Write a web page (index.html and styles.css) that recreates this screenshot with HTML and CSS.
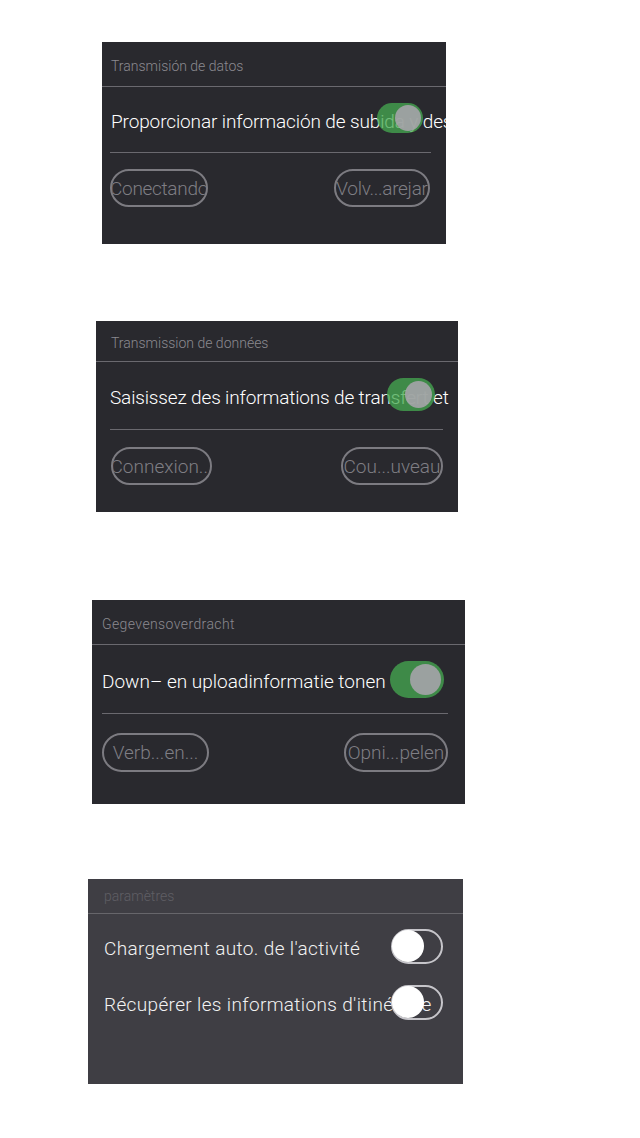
FILE: index.html
```html
<!DOCTYPE html>
<html lang="es">
<head>
<meta charset="utf-8">
<title>Paneles</title>
<link rel="stylesheet" href="styles.css">
</head>
<body>
<main class="page">
  <section class="panel p1">
    <div class="panel-head">Transmisión de datos</div>
    <div class="row divided">
      <span class="row-text">Proporcionar información de subida y descarga</span>
      <span class="toggle on"><span class="knob"></span></span>
    </div>
    <div class="actions">
      <button class="pill">Conectando</button>
      <button class="pill">Volv...arejar</button>
    </div>
  </section>

  <section class="panel p2">
    <div class="panel-head">Transmission de données</div>
    <div class="row divided">
      <span class="row-text">Saisissez des informations de transfert et</span>
      <span class="toggle on"><span class="knob"></span></span>
    </div>
    <div class="actions">
      <button class="pill">Connexion...</button>
      <button class="pill">Cou...uveau</button>
    </div>
  </section>

  <section class="panel p3">
    <div class="panel-head">Gegevensoverdracht</div>
    <div class="row divided">
      <span class="row-text">Down– en uploadinformatie tonen</span>
      <span class="toggle on"><span class="knob"></span></span>
    </div>
    <div class="actions">
      <button class="pill">Verb...en...</button>
      <button class="pill">Opni...pelen</button>
    </div>
  </section>

  <section class="panel p4">
    <div class="panel-head">paramètres</div>
    <div class="rows">
      <div class="row">
        <span class="row-text">Chargement auto. de l'activité</span>
        <span class="toggle off"><span class="knob"></span></span>
      </div>
      <div class="row">
        <span class="row-text">Récupérer les informations d'itinéraire</span>
        <span class="toggle off"><span class="knob"></span></span>
      </div>
    </div>
  </section>
</main>
</body>
</html>
```

FILE: styles.css
```css
* { box-sizing: border-box; }
html, body { margin: 0; padding: 0; background: #ffffff; }
body { font-family: Roboto, "Liberation Sans", sans-serif; }

.page { display: flex; flex-direction: column; align-items: flex-start; }

.panel {
  background: #29292e;
  display: flex;
  flex-direction: column;
  overflow: hidden;
}

.panel-head {
  display: flex;
  align-items: center;
  font-size: 14px;
  font-weight: 300;
  color: #8b8a90;
  border-bottom: 1px solid #6a696f;
  flex: none;
  padding-top: 3px;
}

.row {
  display: grid;
  grid-template-columns: 100%;
  align-items: center;
  flex: none;
}
.row.divided { border-bottom: 1px solid #6a696f; }

.row-text, .toggle { grid-area: 1 / 1; }

.row-text {
  white-space: nowrap;
  font-size: 19px;
  font-weight: 300;
  color: #ffffff;
  padding-top: 4px;
}

.toggle {
  justify-self: end;
  border-radius: 999px;
  display: flex;
  align-items: center;
  position: relative;
  z-index: 1;
}
.toggle.on {
  background: rgba(70, 170, 80, 0.76);
  justify-content: flex-end;
}
.toggle .knob { border-radius: 50%; display: block; }
.toggle.on .knob { background: rgba(168, 164, 172, 0.88); }

.toggle.off {
  border: 2px solid #c6c5ca;
  justify-content: flex-start;
  background: transparent;
}
.toggle.off .knob { background: #ffffff; }

.actions {
  display: flex;
  justify-content: space-between;
  align-items: flex-start;
  flex: none;
}

.pill {
  font-family: Roboto, "Liberation Sans", sans-serif;
  font-size: 19px;
  font-weight: 300;
  color: #7f7e84;
  background: transparent;
  border: 2px solid #7c7b81;
  border-radius: 999px;
  padding: 0;
  white-space: nowrap;
  overflow: hidden;
  display: flex;
  align-items: center;
  justify-content: center;
}

/* panel 1 */
.p1 { margin: 42px 0 0 102px; width: 344px; height: 202px; }
.p1 .panel-head { height: 45px; padding-left: 9px; }
.p1 .row { height: 66px; margin: 0 15px 0 8px; }
.p1 .row-text { letter-spacing: -0.12px; padding-left: 1px; }
.p1 .toggle { width: 46px; height: 30px; margin: 0 8px 4px 0; padding: 2px; }
.p1 .toggle .knob { width: 26px; height: 26px; }
.p1 .actions { padding: 16px 16px 0 8px; }
.p1 .pill { height: 38px; letter-spacing: -0.3px; }
.p1 .pill:first-child { width: 98px; }
.p1 .pill:last-child { width: 96px; }

/* panel 2 */
.p2 { margin: 77px 0 0 96px; width: 362px; height: 191px; }
.p2 .panel-head { height: 41px; padding-left: 15px; }
.p2 .row { height: 68px; margin: 0 15px 0 14px; }
.p2 .row-text { letter-spacing: -0.15px; }
.p2 .toggle { width: 48px; height: 33px; margin: 0 8px 2px 0; padding: 3px; }
.p2 .toggle .knob { width: 27px; height: 27px; }
.p2 .actions { padding: 17px 15px 0 15px; }
.p2 .pill { height: 38px; }
.p2 .pill:first-child { width: 101px; }
.p2 .pill:last-child { width: 102px; }

/* panel 3 */
.p3 { margin: 88px 0 0 92px; width: 373px; height: 204px; }
.p3 .panel-head { height: 45px; padding-left: 10px; letter-spacing: 0.4px; }
.p3 .row { height: 69px; margin: 0 17px 0 10px; }
.p3 .toggle { width: 54px; height: 37px; margin: 0 4px 0 0; padding: 3px; }
.p3 .toggle .knob { width: 31px; height: 31px; }
.p3 .actions { padding: 19px 17px 0 10px; }
.p3 .pill { height: 39px; }
.p3 .pill:first-child { width: 107px; }
.p3 .pill:last-child { width: 104px; }

/* panel 4 */
.p4 { margin: 75px 0 0 88px; width: 375px; height: 205px; background: #3f3e44; }
.p4 .panel-head { height: 35px; padding-left: 16px; padding-top: 0; color: #5f5e64; border-bottom-color: #67666b; }
.p4 .rows { padding-top: 4px; display: flex; flex-direction: column; }
.p4 .row { height: 56px; margin: 0 20px 0 16px; }
.p4 .row-text { color: #f2f2f2; letter-spacing: 0.35px; }
.p4 .toggle { width: 52px; height: 35px; }
.p4 .toggle .knob { width: 32px; height: 32px; margin-left: -1px; }
```
